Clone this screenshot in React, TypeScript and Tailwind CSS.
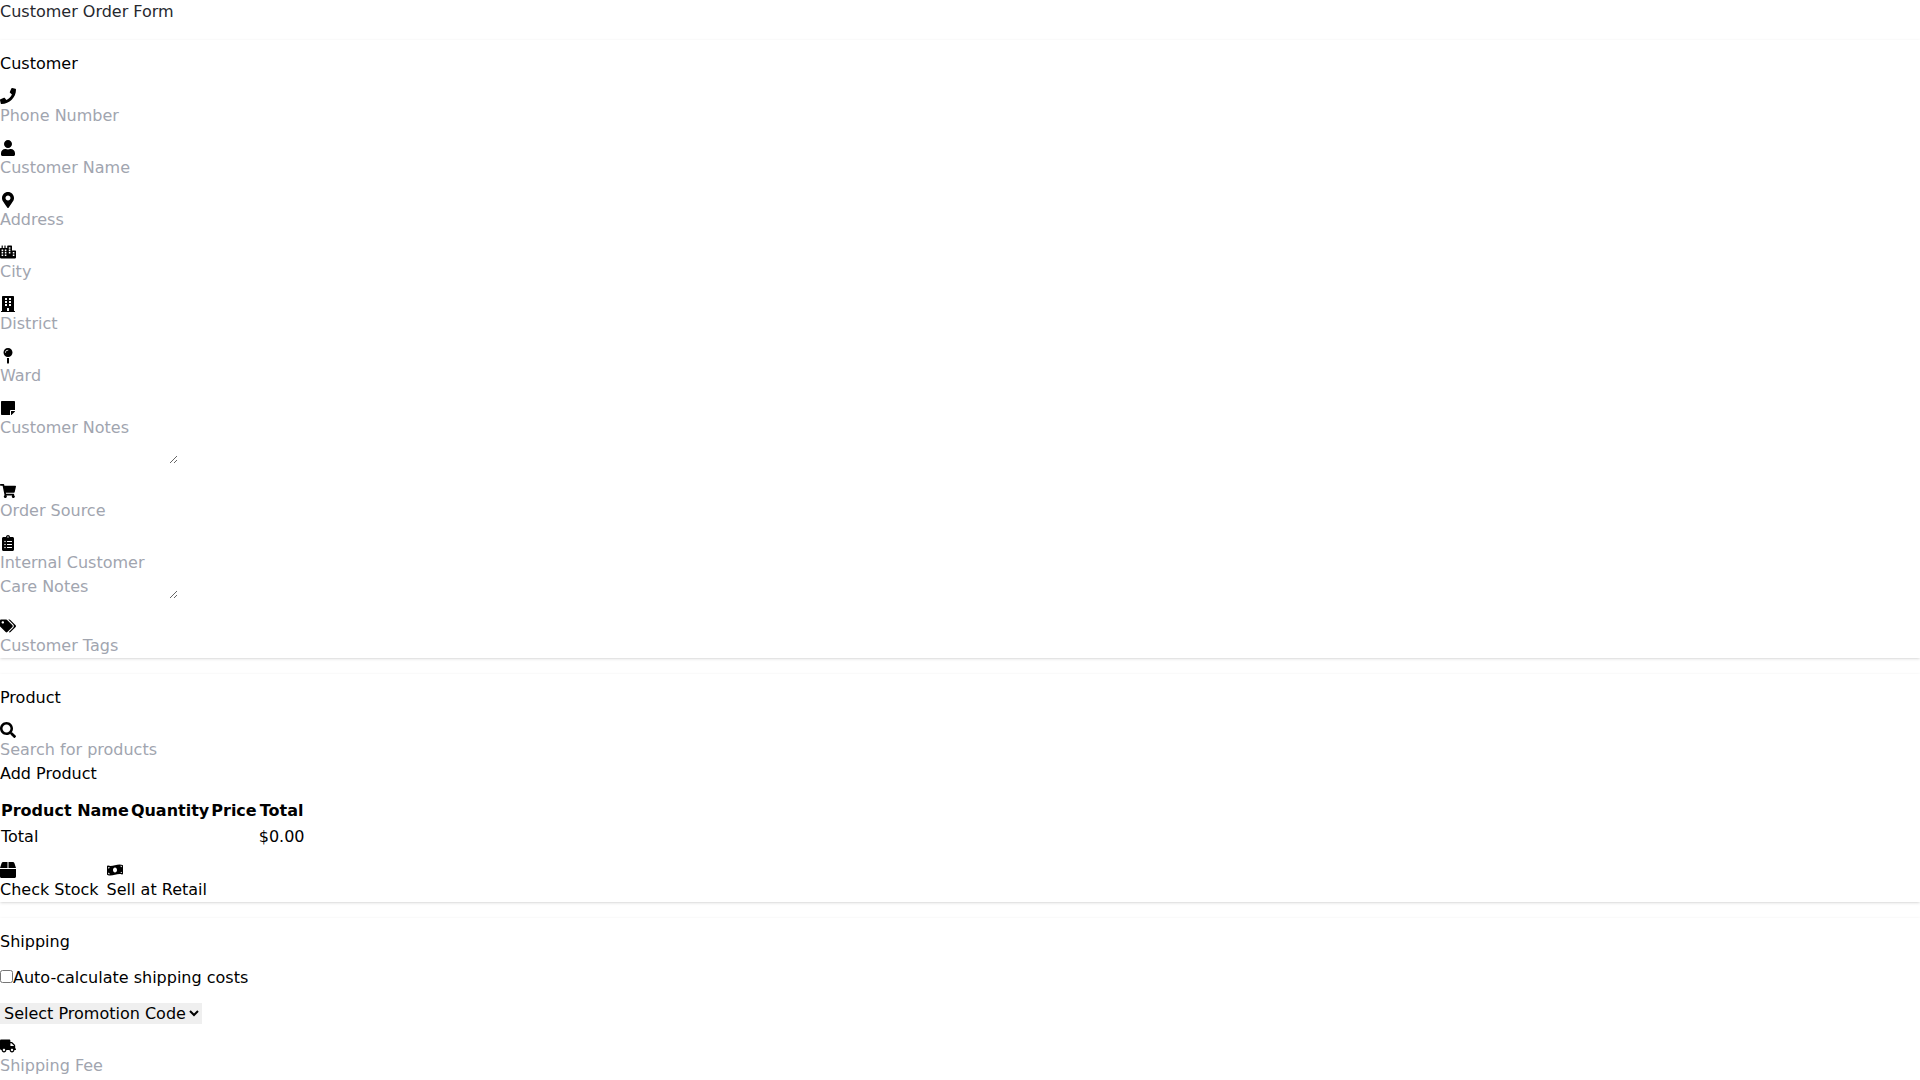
import type { ReactNode } from "react";
import type { IconType } from "react-icons";
import {
  FaBox,
  FaBuilding,
  FaCity,
  FaClipboardList,
  FaMapMarkerAlt,
  FaMapPin,
  FaMoneyBillWave,
  FaPhone,
  FaSearch,
  FaShoppingCart,
  FaStickyNote,
  FaTags,
  FaTruck,
  FaUser,
} from "react-icons/fa";

type FieldProps = {
  icon: IconType;
  label: string;
  multiline?: boolean;
};

function Field({ icon: Icon, label, multiline }: FieldProps) {
  return (
    <label>
      <Icon className="block" aria-hidden="true" />
      {multiline ? (
        <textarea
          placeholder={label}
          aria-label={label}
          className="inline-block resize placeholder:text-[#a1a5af]"
        />
      ) : (
        <input
          type="text"
          placeholder={label}
          aria-label={label}
          className="block placeholder:text-[#a1a5af]"
        />
      )}
    </label>
  );
}

function Card({ title, children }: { title: string; children: ReactNode }) {
  return (
    <section className="flex flex-col gap-3 bg-white pt-3 shadow-[0_1px_3px_rgba(0,0,0,0.12),0_1px_2px_-1px_rgba(0,0,0,0.1)]">
      <h2>{title}</h2>
      {children}
    </section>
  );
}

const customerFields: FieldProps[] = [
  { icon: FaPhone, label: "Phone Number" },
  { icon: FaUser, label: "Customer Name" },
  { icon: FaMapMarkerAlt, label: "Address" },
  { icon: FaCity, label: "City" },
  { icon: FaBuilding, label: "District" },
  { icon: FaMapPin, label: "Ward" },
  { icon: FaStickyNote, label: "Customer Notes", multiline: true },
  { icon: FaShoppingCart, label: "Order Source" },
  { icon: FaClipboardList, label: "Internal Customer Care Notes", multiline: true },
  { icon: FaTags, label: "Customer Tags" },
];

export default function App() {
  return (
    <main className="flex flex-col gap-4 bg-white font-['DejaVu_Sans',sans-serif] text-base text-black">
      <h1 className="text-[#26282e]">Customer Order Form</h1>

      <Card title="Customer">
        {customerFields.map((field) => (
          <Field key={field.label} {...field} />
        ))}
      </Card>

      <Card title="Product">
        <div>
          <Field icon={FaSearch} label="Search for products" />
          <button type="button" className="block">
            Add Product
          </button>
        </div>
        <table className="border-separate self-start border-spacing-0">
          <thead>
            <tr>
              <th className="p-px">Product Name</th>
              <th className="p-px">Quantity</th>
              <th className="p-px">Price</th>
              <th className="p-px">Total</th>
            </tr>
          </thead>
          <tbody>
            <tr>
              <td colSpan={3} className="p-px">
                Total
              </td>
              <td className="p-px">$0.00</td>
            </tr>
          </tbody>
        </table>
        <div className="flex gap-2">
          <button type="button">
            <FaBox className="block" aria-hidden="true" />
            Check Stock
          </button>
          <button type="button">
            <FaMoneyBillWave className="block" aria-hidden="true" />
            Sell at Retail
          </button>
        </div>
      </Card>

      <Card title="Shipping">
        <label>
          <input type="checkbox" />
          Auto-calculate shipping costs
        </label>
        <div>
          <select aria-label="Promotion code" className="bg-[#efefef]">
            <option>Select Promotion Code</option>
          </select>
        </div>
        <div className="pb-3">
          <Field icon={FaTruck} label="Shipping Fee" />
        </div>
      </Card>
    </main>
  );
}
